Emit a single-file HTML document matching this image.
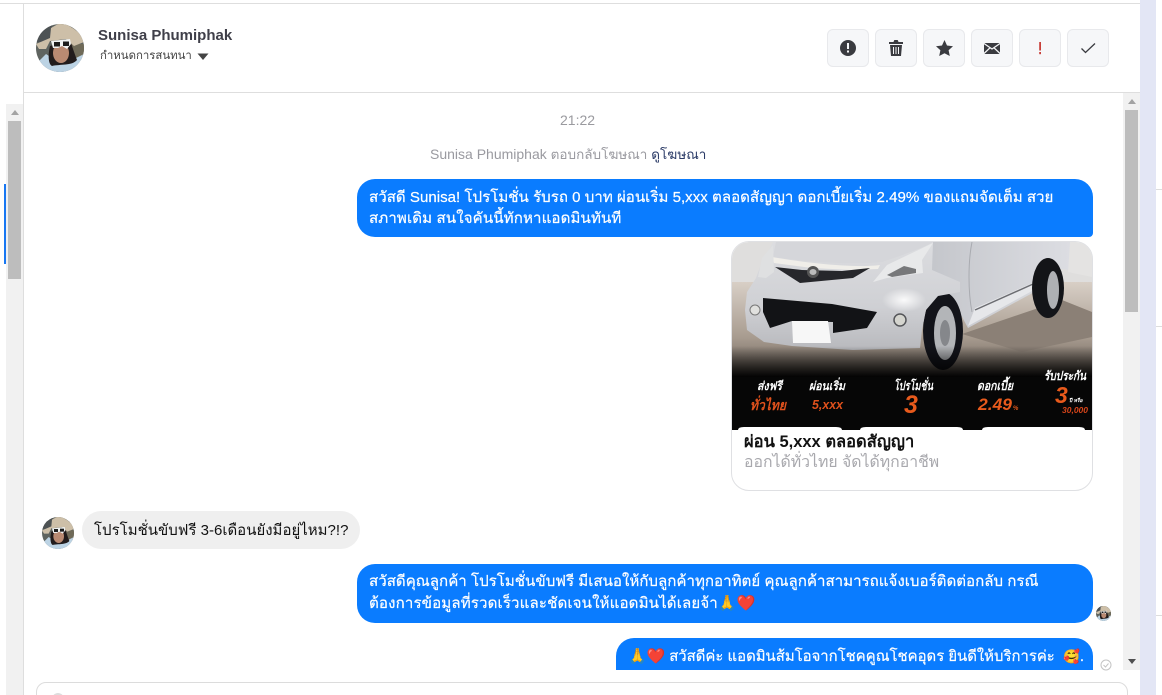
<!DOCTYPE html>
<html><head><meta charset="utf-8">
<style>
*{box-sizing:border-box}
html,body{margin:0;padding:0;width:1162px;height:695px;overflow:hidden;background:#fff}
body{position:relative;font-family:"Liberation Sans","Noto Sans CJK SC",sans-serif;color:#111}
.a{position:absolute}
.t{position:absolute;white-space:nowrap}
.b{position:absolute;background:#0a7cff;border-radius:18px;color:#fff;font-size:15.1px;line-height:21px;-webkit-text-stroke:.2px #fff;white-space:nowrap}
.btn{position:absolute;top:29px;width:42px;height:38px;background:#f6f7f9;border:1px solid #e8e9ec;border-radius:6px}
.btn svg{position:absolute;left:0;top:0;width:40px;height:36px}
</style></head><body>
<svg width="0" height="0" class="a"><defs>
<clipPath id="c"><circle cx="24" cy="24" r="24"/></clipPath>
<g id="av" clip-path="url(#c)">
<rect width="48" height="48" fill="#5f6460"/>
<rect x="0" y="0" width="16" height="18" fill="#4d5254"/>
<rect x="34" y="20" width="14" height="16" fill="#6f6a58"/>
<path d="M0 40L10 30 22 38 36 36 48 30V48H0Z" fill="#bcd3e4"/>
<path d="M14 22C12 30 12 40 16 42 24 40 36 42 41 36 38 28 36 22 34 16Z" fill="#221c1c"/>
<path d="M0 20L14 14 15 4 22 0H30L38 5 47 12 48 18 38 22 30 15 14 17 10 25 3 25Z" fill="#cdbfa8"/>
<ellipse cx="25" cy="29" rx="8" ry="10" fill="#b98a72"/>
<path d="M15 17L34 15 35 20 31 25 26 22 22 24 17 24Z" fill="#f0f2f2"/>
<rect x="18" y="18" width="6" height="4.500" fill="#1c1c1c"/><rect x="27" y="17.500" width="6" height="4.500" fill="#1c1c1c"/>
</g>
</defs></svg>

<div class="a" style="left:0;top:3px;width:1140px;height:1px;background:#dedede"></div>
<div class="a" style="left:23px;top:3px;width:1px;height:692px;background:#dedede"></div>
<div class="a" style="left:24px;top:92px;width:1116px;height:1px;background:#dedede"></div>
<div class="a" style="left:1140px;top:0;width:16px;height:695px;background:#e3e6f5"></div>
<div class="a" style="left:1156px;top:189px;width:6px;height:1px;background:#ddd"></div>
<div class="a" style="left:1156px;top:326px;width:6px;height:1px;background:#ddd"></div>
<div class="a" style="left:1156px;top:615px;width:6px;height:1px;background:#ddd"></div>

<!-- left scrollbar -->
<div class="a" style="left:6px;top:104px;width:17px;height:591px;background:#f1f1f1"></div>
<div class="a" style="left:8px;top:121px;width:13px;height:158px;background:#bdbdbd"></div>
<div class="a" style="left:11px;top:110px;width:0;height:0;border:4px solid transparent;border-top:0;border-bottom:5px solid #a3a3a3"></div>
<div class="a" style="left:4px;top:184px;width:2px;height:80px;background:#1877f2"></div>
<!-- right scrollbar -->
<div class="a" style="left:1123px;top:93px;width:17px;height:577px;background:#f1f1f1"></div>
<div class="a" style="left:1125px;top:110px;width:13px;height:202px;background:#bdbdbd"></div>
<div class="a" style="left:1128px;top:99px;width:0;height:0;border:4px solid transparent;border-top:0;border-bottom:5px solid #a3a3a3"></div>
<div class="a" style="left:1128px;top:659px;width:0;height:0;border:4px solid transparent;border-bottom:0;border-top:5px solid #505050"></div>

<!-- header avatar -->
<svg class="a" style="left:36px;top:24px" width="48" height="48" viewBox="0 0 48 48"><use href="#av"/></svg>
<div class="t" style="left:98px;top:26px;font-size:15px;line-height:19px;font-weight:bold;color:#3f3f49">Sunisa Phumiphak</div>
<div class="t" style="left:100px;top:49px;font-size:11.4px;line-height:15px;color:#444">กำหนดการสนทนา</div>
<svg class="a" style="left:197px;top:53px" width="12" height="8"><path d="M.5 .5H11.5L6 7Z" fill="#444"/></svg>

<!-- buttons -->
<div class="btn" style="left:827px"><svg viewBox="0 0 40 36"><circle cx="20" cy="18" r="8" fill="#3a3b40"/><rect x="19" y="13" width="2" height="6" fill="#f6f7f9"/><rect x="19" y="20.500" width="2" height="2" fill="#f6f7f9"/></svg></div>
<div class="btn" style="left:875px"><svg viewBox="0 0 40 36"><path d="M13 12H17.500L18.300 10H21.700L22.500 12H27V14H13ZM14 15H26L25 26H15Z" fill="#3a3b40"/><path d="M17.500 17V24M20 17V24M22.500 17V24" stroke="#f6f7f9" stroke-width="1"/></svg></div>
<div class="btn" style="left:923px"><svg viewBox="0 0 40 36"><path d="M20.500 10L23 15.500 29 16.200 24.600 20.300 25.800 26 20.500 23.200 15.200 26 16.400 20.300 12 16.200 18 15.500Z" fill="#3a3b40"/></svg></div>
<div class="btn" style="left:971px"><svg viewBox="0 0 40 36"><rect x="12" y="13" width="16" height="11" rx="1" fill="#3a3b40"/><path d="M12 13.500L20 19 28 13.500M12 23.500L18 17.800M28 23.500L22 17.800" stroke="#f6f7f9" stroke-width="1.300" fill="none"/></svg></div>
<div class="btn" style="left:1019px"><svg viewBox="0 0 40 36"><rect x="19.200" y="12" width="1.800" height="8.500" fill="#c8403a"/><rect x="19.200" y="22" width="1.800" height="2.200" fill="#c8403a"/></svg></div>
<div class="btn" style="left:1067px"><svg viewBox="0 0 40 36"><path d="M13.500 18.500L17.500 22.500 27 13.500" stroke="#3a3b40" stroke-width="1.300" fill="none"/></svg></div>

<!-- messages -->
<div class="t" style="left:560px;top:112px;font-size:14px;line-height:17px;color:#9a9a9f">21:22</div>
<div class="t" style="left:430px;top:146px;font-size:14px;line-height:17px;color:#9a9aa0">Sunisa Phumiphak <span style="font-size:13.5px">ตอบกลับโฆษณา</span> <span style="color:#2a3a66;font-size:13.5px">ดูโฆษณา</span></div>

<div class="b" style="left:357px;top:179px;width:736px;height:58px;padding:8px 12px 7px;border-bottom-right-radius:4px">สวัสดี Sunisa! โปรโมชั่น รับรถ 0 บาท ผ่อนเริ่ม 5,xxx ตลอดสัญญา ดอกเบี้ยเริ่ม 2.49% ของแถมจัดเต็ม สวย<br><span style="letter-spacing:.1px">สภาพเดิม สนใจคันนี้ทักหาแอดมินทันที</span></div>

<!-- card -->
<div class="a" style="left:731px;top:241px;width:362px;height:250px;border:1px solid #dfe0e3;border-radius:18px;overflow:hidden;background:#fff">
<svg class="a" style="left:0;top:0" width="360" height="188" viewBox="0 0 360 188">
<defs>
<linearGradient id="fl" x1="0" y1="0" x2="0" y2="1"><stop offset="0" stop-color="#d8cfc6"/><stop offset=".5" stop-color="#a89c90"/><stop offset="1" stop-color="#4a423c"/></linearGradient>
<linearGradient id="bd" x1="0" y1="0" x2="0" y2="1"><stop offset="0" stop-color="#dcdde0"/><stop offset=".6" stop-color="#cfd0d4"/><stop offset="1" stop-color="#b8b9bd"/></linearGradient>
<linearGradient id="sd" x1="0" y1="0" x2="1" y2="0"><stop offset="0" stop-color="#c3c5ca"/><stop offset="1" stop-color="#dcdde2"/></linearGradient>
<linearGradient id="bot" x1="0" y1="0" x2="0" y2="1"><stop offset="0" stop-color="#000" stop-opacity="0"/><stop offset="1" stop-color="#000"/></linearGradient>
<radialGradient id="hl"><stop offset="0" stop-color="#fff" stop-opacity=".9"/><stop offset="1" stop-color="#fff" stop-opacity="0"/></radialGradient>
</defs>
<rect width="360" height="188" fill="#dfdedd"/>
<rect y="40" width="360" height="110" fill="url(#fl)"/>
<path d="M230 92L330 58 360 70V95L290 110Z" fill="#8b8076"/>
<!-- side of car -->
<path d="M195 0H338V28L322 26 306 48 236 86 222 60 205 48 190 42Z" fill="url(#sd)"/>
<path d="M243 66L312 36 311 43 236 84Z" fill="#e6e7ea"/>
<path d="M243 68L310 38" stroke="#6c6d72" stroke-width="1.500"/>
<path d="M240 0C236 20 236 50 240 70" stroke="#a9abb0" stroke-width="1" fill="none"/>
<!-- rear wheel -->
<ellipse cx="316" cy="46" rx="16" ry="30" fill="#131418"/>
<ellipse cx="321" cy="48" rx="6" ry="19" fill="#aeb0b4"/>
<path d="M338 0H360V35L336 30Z" fill="#e4e3e2"/>
<!-- front wheel -->
<ellipse cx="211" cy="89" rx="20" ry="39" fill="#13141a"/>
<ellipse cx="213" cy="91" rx="11" ry="27" fill="#b3b5b8"/>
<ellipse cx="213" cy="91" rx="5" ry="13" fill="#85878b"/>
<!-- front body -->
<path d="M41 0L28 25 24 36 15 50 13 68 15 88 32 100 60 104 121 108 188 106 190 88 194 68 206 54 228 50 228 40 200 28 201 0Z" fill="url(#bd)"/>
<ellipse cx="172" cy="58" rx="22" ry="12" fill="url(#hl)"/>
<path d="M44 0C42 8 42 14 40 15 90 22 130 22 150 20 180 10 195 4 201 0Z" fill="#d5d6da"/>
<path d="M40 15C80 22 125 26 148 23L146 27 120 28 80 26 42 21Z" fill="#f0eee9"/>
<path d="M43 25L68 41 121 36 138 26 110 29 70 28Z" fill="#26272b"/>
<ellipse cx="81" cy="30" rx="6" ry="6" fill="#555"/>
<ellipse cx="81" cy="30" rx="3.500" ry="3" fill="#bbb"/>
<path d="M26 35L30 16 41 3 42 30 34 36Z" fill="#dfe0e1"/>
<path d="M141 40L155 23 201 1 190 18 191 31 155 36Z" fill="#e8e9ea"/>
<path d="M155 33L172 24 184 27 184 31 160 35Z" fill="#77787a"/>
<!-- lower grille -->
<path d="M31 56L100 62 145 70 135 86 101 91 101 80 60 79 38 86 31 70Z" fill="#121316"/>
<path d="M60 79H96L99 101H61Z" fill="#f7f7f7"/>
<circle cx="23" cy="68" r="5" fill="#e0e0de"/><circle cx="23" cy="68" r="5" fill="none" stroke="#777"/>
<circle cx="168" cy="78" r="6" fill="#d5d5cf"/><circle cx="168" cy="78" r="6" fill="none" stroke="#55565a" stroke-width="1.500"/>
<rect y="104" width="360" height="32" fill="url(#bot)"/>
<rect y="135" width="360" height="53" fill="#060606"/>
<g font-family="Liberation Sans,Noto Sans CJK SC,sans-serif" font-style="italic" font-weight="bold">
<text x="25" y="148" font-size="12" textLength="25" lengthAdjust="spacingAndGlyphs" fill="#fff">ส่งฟรี</text>
<text x="18" y="168" font-size="14" textLength="36" lengthAdjust="spacingAndGlyphs" fill="#e0511c">ทั่วไทย</text>
<text x="77" y="148" font-size="12" textLength="36" lengthAdjust="spacingAndGlyphs" fill="#fff">ผ่อนเริ่ม</text>
<text x="80" y="167" font-size="12.500" textLength="31" lengthAdjust="spacingAndGlyphs" fill="#e0511c">5,xxx</text>
<text x="162" y="148" font-size="12.500" textLength="39" lengthAdjust="spacingAndGlyphs" fill="#fff">โปรโมชั่น</text>
<text x="172" y="171" font-size="25" fill="#e85a1c">3</text>
<text x="245" y="148" font-size="12.500" textLength="36" lengthAdjust="spacingAndGlyphs" fill="#fff">ดอกเบี้ย</text>
<text x="246" y="168" font-size="17" textLength="34" lengthAdjust="spacingAndGlyphs" fill="#e85a1c">2.49</text>
<text x="281" y="168" font-size="6" fill="#e85a1c">%</text>
<text x="312" y="138" font-size="12.500" textLength="42" lengthAdjust="spacingAndGlyphs" fill="#fff">รับประกัน</text>
<text x="323" y="161" font-size="23" fill="#e85a1c">3</text>
<text x="337" y="160" font-size="5" fill="#fff">ปี หรือ</text>
<text x="330" y="171" font-size="8" textLength="26" lengthAdjust="spacingAndGlyphs" fill="#d8451a">30,000</text>
</g>
<path d="M6 188V188Q6 185 12 185H104Q110 185 110 188ZM128 188Q128 185 134 185H225Q231 185 231 188ZM250 188Q250 185 256 185H347Q353 185 353 188Z" fill="#fff"/>
</svg>
<div class="t" style="left:12px;top:189px;font-size:16.5px;line-height:22px;font-weight:bold;color:#111">ผ่อน 5,xxx ตลอดสัญญา</div>
<div class="t" style="left:12px;top:210px;font-size:15.8px;line-height:22px;color:#a8a8ad">ออกได้ทั่วไทย จัดได้ทุกอาชีพ</div>
</div>

<!-- incoming -->
<svg class="a" style="left:42px;top:517px" width="32" height="32" viewBox="0 0 48 48"><use href="#av"/></svg>
<div class="a" style="left:82px;top:511px;width:278px;height:38px;background:#efefef;border-radius:19px;padding:9px 12px;font-size:15px;line-height:21px;color:#111;white-space:nowrap">โปรโมชั่นขับฟรี 3-6เดือนยังมีอยู่ไหม?!?</div>

<div class="b" style="left:357px;top:564px;width:736px;height:59px;padding:7px 12px;line-height:22px">สวัสดีคุณลูกค้า โปรโมชั่นขับฟรี มีเสนอให้กับลูกค้าทุกอาทิตย์ คุณลูกค้าสามารถแจ้งเบอร์ติดต่อกลับ กรณี<br><span style="letter-spacing:.12px">ต้องการข้อมูลที่รวดเร็วและชัดเจนให้แอดมินได้เลยจ้า</span>🙏❤️</div>
<svg class="a" style="left:1096px;top:606px" width="15" height="15" viewBox="0 0 48 48"><use href="#av"/></svg>

<div class="a" style="left:0;top:638px;width:1123px;height:32px;overflow:hidden">
<div class="b" style="left:616px;top:0;width:477px;height:58px;padding:8px 12px;font-size:14.9px">🙏❤️ สวัสดีค่ะ แอดมินส้มโอจากโชคคูณโชคอุดร ยินดีให้บริการค่ะ &nbsp;<span style="font-size:13.5px">🥰</span>.</div>
</div>
<svg class="a" style="left:1100px;top:659px" width="12" height="12" viewBox="0 0 12 12"><circle cx="6" cy="6" r="5" fill="none" stroke="#c4c4c4"/><path d="M3.500 6L5.500 8 8.500 4.500" fill="none" stroke="#c4c4c4"/></svg>

<!-- composer -->
<div class="a" style="left:36px;top:682px;width:1092px;height:30px;border:1px solid #dcdcdc;border-radius:10px;background:#fff"></div>
<div class="a" style="left:52px;top:693px;width:12px;height:12px;border-radius:50%;background:#ddd"></div>
</body></html>
